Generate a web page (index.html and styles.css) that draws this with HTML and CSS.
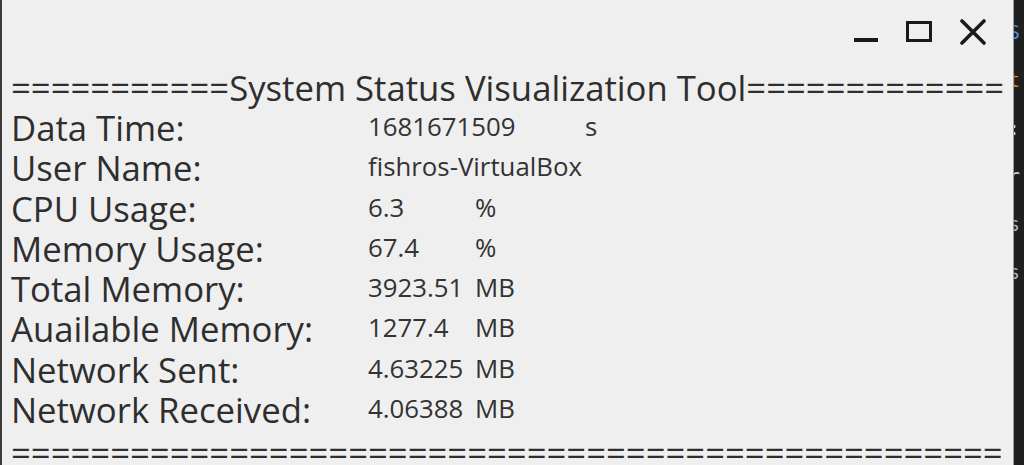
FILE: index.html
```html
<!DOCTYPE html>
<html>
<head>
<meta charset="utf-8">
<link rel="stylesheet" href="styles.css">
</head>
<body>
<div class="screen">
  <div class="window">
    <div class="titlebar">
      <svg class="ctl" width="26" height="26" viewBox="0 0 26 26"><rect x="1" y="19" width="24" height="4" fill="#1a1a1a"/></svg>
      <svg class="ctl" width="28" height="26" viewBox="0 0 28 26"><rect x="2.5" y="3.5" width="23" height="18" fill="none" stroke="#1a1a1a" stroke-width="3"/><rect x="2" y="2" width="24" height="3" fill="#1a1a1a"/></svg>
      <svg class="ctl" width="28" height="26" viewBox="0 0 28 26"><path d="M3 2 L25 24 M25 2 L3 24" stroke="#1a1a1a" stroke-width="3.6" stroke-linecap="round"/></svg>
    </div>
    <div class="heading">===========System Status Visualization Tool=============</div>
    <div class="rows">
      <div class="row"><span class="label">Data Time:</span><span class="value wide">1681671509</span><span class="unit">s</span></div>
      <div class="row"><span class="label">User Name:</span><span class="value">fishros-VirtualBox</span></div>
      <div class="row"><span class="label">CPU Usage:</span><span class="value">6.3</span><span class="unit">%</span></div>
      <div class="row"><span class="label">Memory Usage:</span><span class="value">67.4</span><span class="unit">%</span></div>
      <div class="row"><span class="label">Total Memory:</span><span class="value">3923.51</span><span class="unit">MB</span></div>
      <div class="row"><span class="label">Auailable Memory:</span><span class="value">1277.4</span><span class="unit">MB</span></div>
      <div class="row"><span class="label">Network Sent:</span><span class="value">4.63225</span><span class="unit">MB</span></div>
      <div class="row"><span class="label">Network Received:</span><span class="value">4.06388</span><span class="unit">MB</span></div>
    </div>
    <div class="footer">==================================================</div>
  </div>
  <div class="term">
    <span class="g c1">S</span>
    <span class="g c2">t</span>
    <span class="g">:</span>
    <span class="g"> </span>
    <span class="g">r</span>
    <span class="g c3">s</span>
    <span class="g c3">s</span>
  </div>
</div>
</body>
</html>
```

FILE: styles.css
```css
html, body {
  margin: 0;
  padding: 0;
  height: 100%;
  overflow: hidden;
  background: #efefef;
}
.screen {
  display: flex;
  height: 465px;
  width: 1024px;
}
.window {
  flex: 0 0 1014px;
  background: #efefef;
  border-left: 2px solid #3c3c3c;
  border-right: 1px solid #9a9a9a;
  box-sizing: border-box;
  padding-left: 9px;
  font-family: "Open Sans", "Noto Sans", sans-serif;
  color: #2e2e2e;
  overflow: hidden;
}
.titlebar {
  height: 68px;
  display: flex;
  justify-content: flex-end;
  align-items: flex-start;
  padding-top: 19px;
  box-sizing: border-box;
  padding-right: 26px;
  gap: 26px;
}
.heading {
  font-size: 34.7px;
  line-height: 40px;
  white-space: nowrap;
}
.rows {
  display: flex;
  flex-direction: column;
}
.row {
  display: flex;
  align-items: baseline;
  height: 40.3px;
}
.label {
  width: 357px;
  font-size: 34.7px;
  line-height: 40px;
  white-space: nowrap;
}
.value, .unit {
  font-size: 25.8px;
  white-space: nowrap;
  position: relative;
  top: -5px;
  color: #333;
}
.value {
  width: 107px;
}
.value.wide {
  width: 217px;
}
.footer {
  margin-top: 3px;
  font-size: 34.7px;
  line-height: 40px;
  white-space: nowrap;
}
.term {
  flex: 1;
  background: #1f1f1f;
  display: flex;
  flex-direction: column;
  font-family: "DejaVu Sans Mono", monospace;
  font-size: 20px;
  line-height: 48px;
  color: #cfcfcf;
  overflow: hidden;
  padding-top: 8px;
}
.g { margin-left: -6px; }
.c1 { color: #4a8fd0; }
.c2 { color: #d08a3a; }
.c3 { color: #9ab0d0; }
```
